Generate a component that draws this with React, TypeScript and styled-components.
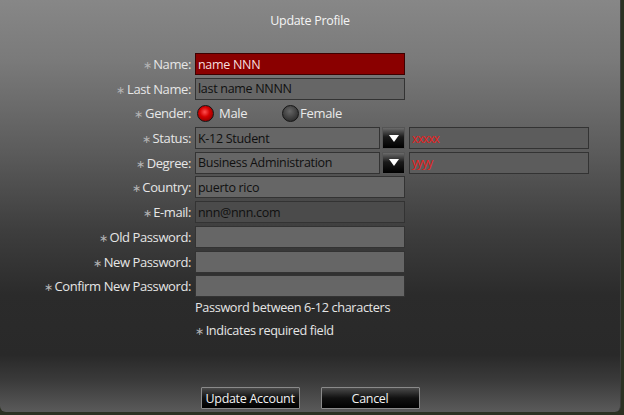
import React from "react";
import styled, { createGlobalStyle } from "styled-components";

const GlobalStyle = createGlobalStyle`
  html, body {
    margin: 0;
    padding: 0;
    background: #2b3122;
  }
  body {
    font-family: "Open Sans", "Noto Sans", sans-serif;
  }
`;

const Panel = styled.div`
  width: 621px;
  height: 412px;
  box-sizing: border-box;
  border-right: 1px solid #3c3c3c;
  border-radius: 0 0 6px 6px;
  background: linear-gradient(
    to bottom,
    #878787 0px,
    #7a7a7a 60px,
    #5c5c5c 150px,
    #3e3e3e 230px,
    #2b2b2b 295px,
    #292929 355px,
    #3a3a3a 380px,
    #5a5a5a 412px
  );
  display: flex;
  flex-direction: column;
`;

const Title = styled.h1`
  margin: 0;
  padding-top: 12px;
  height: 53px;
  box-sizing: border-box;
  text-align: center;
  font-size: 12.5px;
  font-weight: normal;
  color: #f4f4f4;
  letter-spacing: -0.3px;
`;

const Form = styled.div`
  display: grid;
  grid-template-columns: 191px 210px 180px;
  grid-auto-rows: 22px;
  column-gap: 4px;
  row-gap: 2.7px;
  align-items: center;
`;

const Label = styled.label`
  text-align: right;
  font-size: 13px;
  color: #e6e6e6;
  letter-spacing: -0.4px;
  white-space: nowrap;
`;

const Star = styled.span`
  color: #b5b5b5;
  font-size: 11px;
  margin-right: 2px;
`;

const Field = styled.div<{ $tone?: "red" | "dark" | "normal" }>`
  height: 22px;
  box-sizing: border-box;
  border: 1px solid ${({ $tone }) => ($tone === "red" ? "#3d0000" : "#333")};
  background: ${({ $tone }) =>
    $tone === "red" ? "#8a0000" : $tone === "dark" ? "#4b4b4b" : "#666"};
  color: ${({ $tone }) => ($tone === "red" ? "#f6dede" : "#101010")};
  font-size: 12.5px;
  letter-spacing: -0.3px;
  padding-left: 2px;
  display: flex;
  align-items: center;
  white-space: nowrap;
  overflow: hidden;
`;

const Side = styled(Field)`
  background: #5c5c5c;
  color: #e82020;
  font-size: 12px;
  letter-spacing: -0.9px;
`;

const SelectWrap = styled.div`
  display: flex;
  gap: 2px;
`;

const SelectBox = styled(Field)`
  flex: 1;
`;

const Arrow = styled.div`
  width: 23px;
  height: 22px;
  box-sizing: border-box;
  border: 1px solid #555;
  background: linear-gradient(to bottom, #6a6a6a 0%, #1a1a1a 45%, #000 100%);
  display: flex;
  align-items: center;
  justify-content: center;
`;

const RadioGroup = styled.div`
  display: flex;
  align-items: center;
`;

const RadioOption = styled.span<{ $width?: number }>`
  display: flex;
  align-items: center;
  width: ${({ $width }) => ($width ? `${$width}px` : "auto")};
  font-size: 13px;
  color: #eaeaea;
  letter-spacing: -0.3px;
`;

const Dot = styled.span<{ $on?: boolean }>`
  width: 17px;
  height: 17px;
  box-sizing: border-box;
  border-radius: 50%;
  margin-left: 2px;
  margin-right: ${({ $on }) => ($on ? "5px" : "1px")};
  border: 1px solid #151515;
  background: ${({ $on }) =>
    $on
      ? "radial-gradient(circle at 45% 40%, #ff5050 0%, #d40000 40%, #6a0000 100%)"
      : "radial-gradient(circle at 45% 35%, #666 0%, #3a3a3a 60%, #222 100%)"};
`;

const Notes = styled.div`
  padding-left: 195px;
  padding-top: 1px;
  display: flex;
  flex-direction: column;
  gap: 5px;
  font-size: 12.7px;
  color: #e6e6e6;
  letter-spacing: -0.35px;
`;

const Buttons = styled.div`
  margin-top: auto;
  margin-bottom: 3px;
  display: flex;
  justify-content: center;
  gap: 21px;
`;

const Button = styled.button`
  width: 99px;
  height: 22px;
  border: 1px solid #8a8a8a;
  border-radius: 1px;
  background: linear-gradient(to bottom, #4a4a4a 0%, #111 50%, #000 100%);
  color: #f2f2f2;
  font-family: "Open Sans", "Noto Sans", sans-serif;
  font-size: 12.5px;
  letter-spacing: -0.3px;
  padding: 0;
`;

const DownArrow = () => (
  <svg width="10" height="7" viewBox="0 0 10 7">
    <path d="M0 0 H10 L5 7 Z" fill="#fff" />
  </svg>
);

const Req: React.FC<{ children: React.ReactNode }> = ({ children }) => (
  <Label>
    <Star>∗</Star>
    {children}
  </Label>
);

const Empty = () => <span />;

export default function App() {
  return (
    <>
      <GlobalStyle />
      <Panel>
        <Title>Update Profile</Title>
        <Form>
          <Req>Name:</Req>
          <Field $tone="red">name NNN</Field>
          <Empty />

          <Req>Last Name:</Req>
          <Field>last name NNNN</Field>
          <Empty />

          <Req>Gender:</Req>
          <RadioGroup>
            <RadioOption $width={85}>
              <Dot $on />
              Male
            </RadioOption>
            <RadioOption>
              <Dot />
              Female
            </RadioOption>
          </RadioGroup>
          <Empty />

          <Req>Status:</Req>
          <SelectWrap>
            <SelectBox>K-12 Student</SelectBox>
            <Arrow>
              <DownArrow />
            </Arrow>
          </SelectWrap>
          <Side>xxxxx</Side>

          <Req>Degree:</Req>
          <SelectWrap>
            <SelectBox>Business Administration</SelectBox>
            <Arrow>
              <DownArrow />
            </Arrow>
          </SelectWrap>
          <Side>yyyy</Side>

          <Req>Country:</Req>
          <Field>puerto rico</Field>
          <Empty />

          <Req>E-mail:</Req>
          <Field $tone="dark">nnn@nnn.com</Field>
          <Empty />

          <Req>Old Password:</Req>
          <Field />
          <Empty />

          <Req>New Password:</Req>
          <Field />
          <Empty />

          <Req>Confirm New Password:</Req>
          <Field />
          <Empty />
        </Form>
        <Notes>
          <span>Password between 6-12 characters</span>
          <span>
            <Star>∗</Star>Indicates required field
          </span>
        </Notes>
        <Buttons>
          <Button>Update Account</Button>
          <Button>Cancel</Button>
        </Buttons>
      </Panel>
    </>
  );
}
